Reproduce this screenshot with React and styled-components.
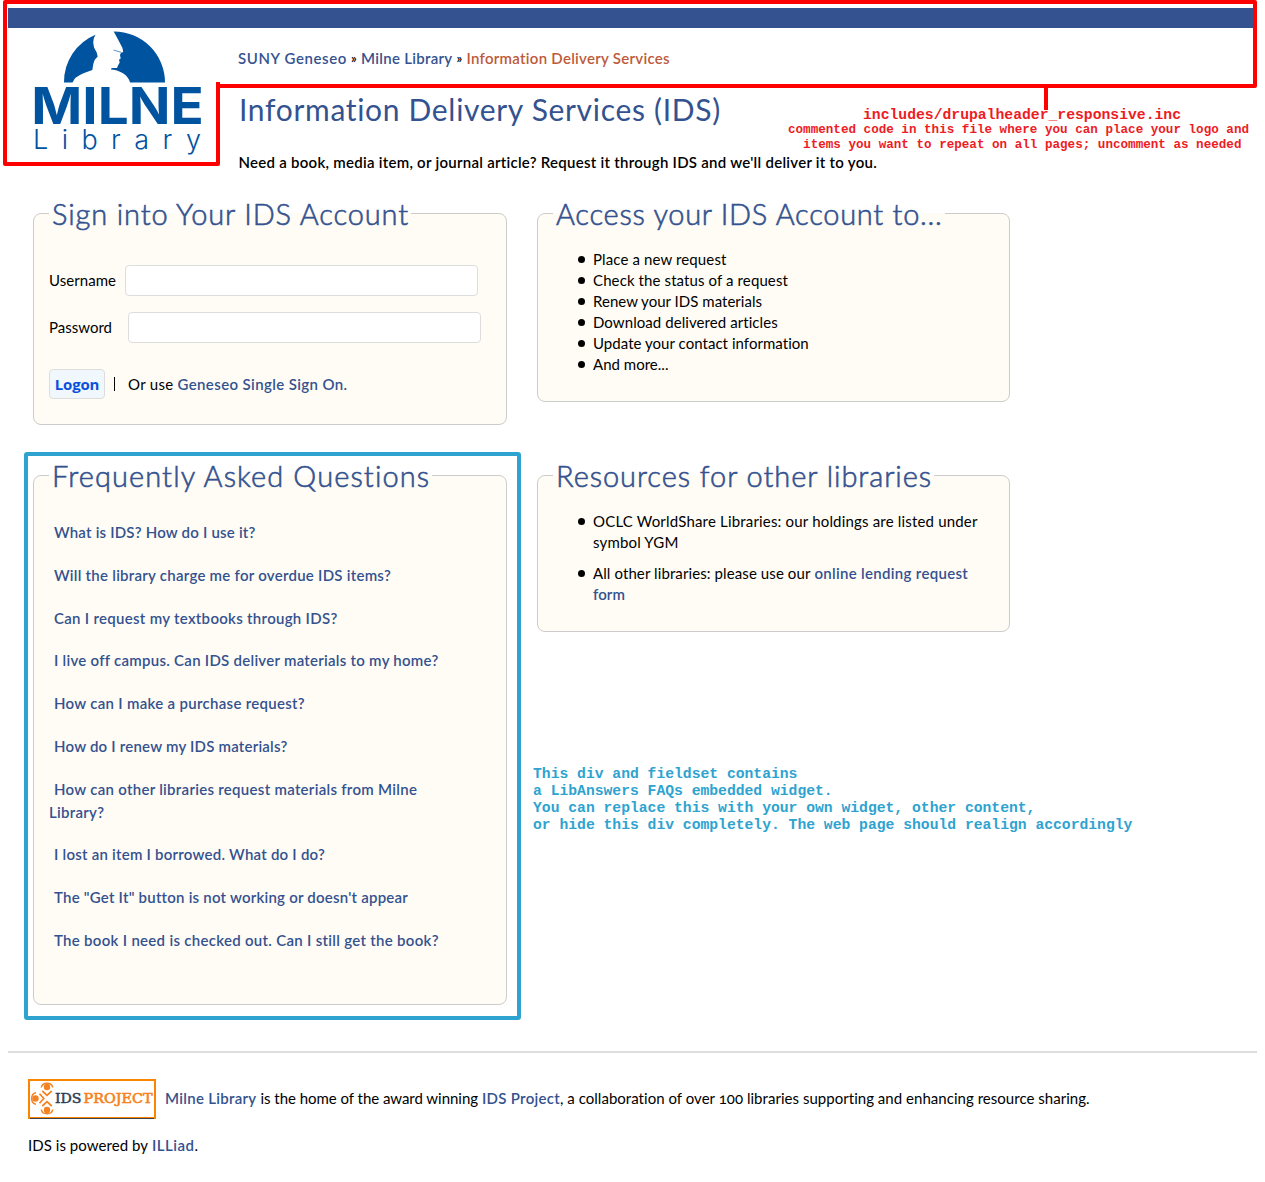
import React from "react";
import styled, { createGlobalStyle } from "styled-components";

const navy = "#34528f";
const red = "#fe0000";
const cyan = "#2ea3cf";

const GlobalStyle = createGlobalStyle`
  *, *::before { box-sizing: border-box; }
  body {
    margin: 0;
    background: #fff;
    color: #000;
    font-family: Lato, "Open Sans", sans-serif;
    font-size: 15px;
    font-variant-numeric: oldstyle-nums;
    white-space: nowrap;
  }
`;

const Page = styled.div`
  position: relative;
  width: 1265px;
  height: 1182px;
  padding: 8px;
  overflow: hidden;
`;

const TopBar = styled.div`
  height: 20px;
  background: ${navy};
`;

const Header = styled.header`
  display: grid;
  grid-template-columns: 204px 1fr;
  height: 167px;
  padding-left: 26px;
`;

const HeaderText = styled.div`
  padding-top: 20px;
`;

const Text = styled.span`
  letter-spacing: ${(p) => p.$track || 0}px;
`;

const Link = styled.a`
  color: ${(p) => (p.$current ? "#bd5a3a" : navy)};
  font-weight: 600;
  letter-spacing: ${(p) => p.$track || 0.28}px;
  text-decoration: none;
`;

const Breadcrumb = styled.nav`
  display: flex;
  gap: 4px;
  height: 20px;
  line-height: 20px;
`;

const Separator = styled.span`
  width: 6px;
  font-size: 13px;
  font-weight: 600;
`;

const Title = styled.h1`
  margin: 21px 0 23px;
  padding-left: 1px;
  color: ${navy};
  font-size: 30px;
  font-weight: 400;
  line-height: 40px;
  letter-spacing: 0.68px;
`;

const Intro = styled.p`
  margin: 0;
  padding-left: 0.5px;
  font-weight: 600;
  line-height: 20px;
  letter-spacing: 0.268px;
`;

const Columns = styled.main`
  display: grid;
  grid-template-columns: 474px 473px;
  column-gap: 30px;
  row-gap: 32px;
  align-items: start;
  margin-left: 25px;
`;

const Card = styled.fieldset`
  height: ${(p) => p.$height}px;
  min-width: 0;
  margin: 0;
  padding: 0 15px;
  border: 1px solid #ccc;
  border-radius: 8px;
  background: #fffcf5;
`;

const Legend = styled.legend`
  height: 37px;
  padding: 0 2px 0 3px;
  color: ${navy};
  font-size: 29px;
  font-weight: 300;
  line-height: 37px;
  letter-spacing: ${(p) => p.$track}px;
  -webkit-text-stroke: 0.6px ${navy};
`;

const Field = styled.label`
  display: flex;
  align-items: center;
  gap: ${(p) => p.$gap}px;
  height: 31px;
  margin-top: ${(p) => p.$top}px;
`;

const FieldLabel = styled(Text)`
  padding-bottom: 2px;
`;

const Input = styled.input`
  width: 353px;
  height: 31px;
  border: 1px solid #ddd;
  border-radius: 4px;
  background: #fff;
`;

const Actions = styled.div`
  display: flex;
  align-items: center;
  height: 30px;
  margin-top: 26px;
`;

const LogonButton = styled.button`
  width: 56px;
  height: 30px;
  padding: 0;
  border: 1px solid #ddd;
  border-radius: 4px;
  background: #f0f8fd;
  color: #0b50dc;
  font: 700 15px/26px "Open Sans", sans-serif;
  letter-spacing: -0.18px;
`;

const Divider = styled.span`
  width: 1px;
  height: 14px;
  margin: 0 13px 0 9px;
  background: #000;
`;

const Choice = styled.span`
  display: flex;
  gap: 4px;
`;

const List = styled.ul`
  display: flex;
  flex-direction: column;
  gap: ${(p) => p.$gap || 0}px;
  margin: 0;
  padding: 17px 0 0 25px;
  list-style: none;
  line-height: 21px;
`;

const Item = styled.li`
  display: grid;
  grid-template-columns: 15px 1fr;

  &::before {
    content: "";
    width: 7px;
    height: 7px;
    margin-top: 7px;
    border-radius: 50%;
    background: #000;
  }
`;

const Line = styled.div`
  display: flex;
  gap: 4px;
`;

const Questions = styled.div`
  display: flex;
  flex-direction: column;
  gap: 20px;
  padding: 27px 0 0;
  line-height: 22.8px;
`;

const Question = styled(Link)`
  display: block;
  text-indent: 5px;
  white-space: pre-line;
`;

const Footer = styled.footer`
  height: 120px;
  margin-top: 46px;
  padding: 26px 20px 0;
  border-top: 2px solid #ddd;
`;

const FooterRow = styled.div`
  display: flex;
  align-items: center;
  gap: 4px;
  height: ${(p) => p.$height}px;
  margin-top: ${(p) => p.$top || 0}px;
  padding-bottom: ${(p) => p.$lift || 0}px;
  line-height: 20px;
`;

const Badge = styled.div`
  align-self: flex-start;
  width: 128px;
  height: 40px;
  margin-right: 5px;
  border: 2px solid #fb8500;
`;

const FrameDrawing = styled.svg`
  position: absolute;
  top: 0;
  left: 0;
  pointer-events: none;
`;

const WidgetFrame = styled.div`
  position: absolute;
  top: 452px;
  left: 24px;
  width: 497px;
  height: 568px;
  border: 4px solid ${cyan};
  border-radius: 3px;
  pointer-events: none;
`;

const Note = styled.div`
  position: absolute;
  font-family: "Courier New", "Liberation Mono", monospace;
  font-weight: 700;
`;

const HeaderNote = styled(Note)`
  top: 107px;
  left: 788px;
  width: 461px;
  color: #ed1c24;
  font-size: 12.6px;
  line-height: 14.5px;
  text-align: center;
`;

const FileName = styled.div`
  padding-left: 7px;
  font-size: 14.72px;
  line-height: 16px;
`;

const WidgetNote = styled(Note)`
  top: 766px;
  left: 533px;
  color: ${cyan};
  font-size: 14.7px;
  line-height: 17px;
`;

const LogoDrawing = styled.svg`
  display: block;
  overflow: visible;
`;

function MilneLogo() {
  return (
    <LogoDrawing width="184" height="132" viewBox="34 28 184 132" fill="#00539f">
      <path d="M64 82.500A51 51 0 0 1 95.500 34.800L93.800 38.300L93.200 42.500L94 47.500L96.700 52.500L97.700 56.500L94.600 60L93.300 64L92.300 70L83.500 73.300C79 75.500 76 77 74.500 79L72.500 82.500Z" />
      <path d="M113.700 31.500A51 51 0 0 1 165 82.500H130C129 78 125.500 74.500 121.500 72.500C118 70.500 114 69.800 111 69.500L111.600 67.900L117 67.900L118.300 65L119.700 62.500L119 59.700L120.700 58.500L120 55L121 52.700L123.200 51.900L122.500 48L118.300 40Z" />
      <path d="M113.500 50L121 52.300" fill="none" stroke="#5b93c7" strokeWidth="1" />
      <text x="31.300" y="124" fontFamily="Inter" fontSize="51" fontWeight="700" textLength="172.500" lengthAdjust="spacingAndGlyphs">MILNE</text>
      <text x="33" y="149" fontFamily="Inter" fontSize="27" fontWeight="300" textLength="168" lengthAdjust="spacing">Library</text>
    </LogoDrawing>
  );
}

function Figure({ turn }) {
  return (
    <g transform={`rotate(${turn} 17 17.500)`}>
      <circle cx="17" cy="6" r="3.200" fill="#f58220" />
      <path d="M11.300 6.500C12 2.200 15 2.200 17 2.200S22 2.200 22.700 6.500" fill="none" stroke="#f58220" strokeWidth="1.500" />
      <path d="M12.300 10L17 14.300L21.700 10" fill="none" stroke="#f58220" strokeWidth="1.700" />
    </g>
  );
}

function IdsBadge() {
  return (
    <Badge>
      <LogoDrawing width="124" height="36" viewBox="0 0 124 36">
        <Figure turn={0} />
        <Figure turn={180} />
        <Figure turn={270} />
        <text x="25" y="22.300" fill="#2f3e55" fontFamily="DejaVu Serif" fontSize="13.500" stroke="#2f3e55" strokeWidth=".5" textLength="26.500" lengthAdjust="spacingAndGlyphs">IDS</text>
        <text x="53.500" y="22.300" fill="#f58220" fontFamily="DejaVu Serif" fontSize="13.500" stroke="#f58220" strokeWidth=".6" textLength="69" lengthAdjust="spacingAndGlyphs">PROJECT</text>
        <path d="M0 37.500H124" stroke="#3c4250" />
      </LogoDrawing>
    </Badge>
  );
}

const accountItems = [
  ["Place a new request", 0.121],
  ["Check the status of a request", 0.109],
  ["Renew your IDS materials", 0.023],
  ["Download delivered articles", 0.071],
  ["Update your contact information", 0.041],
  ["And more...", 0.02],
];

const questions = [
  ["What is IDS? How do I use it?", 0.202],
  ["Will the library charge me for overdue IDS items?", 0.259],
  ["Can I request my textbooks through IDS?", 0.294],
  ["I live off campus. Can IDS deliver materials to my home?", 0.264],
  ["How can I make a purchase request?", 0.297],
  ["How do I renew my IDS materials?", 0.211],
  ["How can other libraries request materials from Milne\nLibrary?", 0.285],
  ["I lost an item I borrowed. What do I do?", 0.236],
  ['The "Get It" button is not working or doesn\'t appear', 0.221],
  ["The book I need is checked out. Can I still get the book?", 0.295],
];

export default function App() {
  return (
    <Page>
      <GlobalStyle />
      <TopBar />
      <Header>
        <MilneLogo />
        <HeaderText>
          <Breadcrumb>
            <Link $track={0.607}>SUNY Geneseo</Link>
            <Separator>»</Separator>
            <Link $track={0.296}>Milne Library</Link>
            <Separator>»</Separator>
            <Link $current $track={0.28}>Information Delivery Services</Link>
          </Breadcrumb>
          <Title>Information Delivery Services (IDS)</Title>
          <Intro>
            Need a book, media item, or journal article? Request it through IDS and we'll deliver it to you.
          </Intro>
        </HeaderText>
      </Header>

      <Columns>
        <Card $height={230}>
          <Legend $track={0.865}>Sign into Your IDS Account</Legend>
          <Field $top={33} $gap={9}>
            <FieldLabel $track={0.045}>Username</FieldLabel>
            <Input type="text" />
          </Field>
          <Field $top={16} $gap={16}>
            <FieldLabel>Password</FieldLabel>
            <Input type="password" />
          </Field>
          <Actions>
            <LogonButton>Logon</LogonButton>
            <Divider />
            <Choice>
              <Text $track={0.313}>Or use</Text>
              <Link $track={0.382}>Geneseo Single Sign On.</Link>
            </Choice>
          </Actions>
        </Card>

        <Card $height={207}>
          <Legend $track={0.72}>Access your IDS Account to...</Legend>
          <List>
            {accountItems.map(([label, track]) => (
              <Item key={label}>
                <Text $track={track}>{label}</Text>
              </Item>
            ))}
          </List>
        </Card>

        <Card $height={548}>
          <Legend $track={1.1}>Frequently Asked Questions</Legend>
          <Questions>
            {questions.map(([label, track]) => (
              <Question key={label} $track={track}>{label}</Question>
            ))}
          </Questions>
        </Card>

        <Card $height={175}>
          <Legend $track={0.94}>Resources for other libraries</Legend>
          <List $gap={10}>
            <Item>
              <div>
                <Line><Text $track={0.18}>OCLC WorldShare Libraries: our holdings are listed under</Text></Line>
                <Line><Text $track={0.169}>symbol YGM</Text></Line>
              </div>
            </Item>
            <Item>
              <div>
                <Line>
                  <Text $track={0.1}>All other libraries: please use our</Text>
                  <Link $track={0.31}>online lending request</Link>
                </Line>
                <Line><Link $track={0.082}>form</Link></Line>
              </div>
            </Item>
          </List>
        </Card>
      </Columns>

      <Footer>
        <FooterRow $height={40} $lift={3}>
          <IdsBadge />
          <Link $track={0.296}>Milne Library</Link>
          <Text $track={-0.036}>is the home of the award winning</Text>
          <span>
            <Link $track={0.283}>IDS Project</Link>
            <Text $track={0.033}>, a collaboration of over 100 libraries supporting and enhancing resource sharing.</Text>
          </span>
        </FooterRow>
        <FooterRow $height={20} $top={16}>
          <Text $track={0.049}>IDS is powered by</Text>
          <span>
            <Link $track={0.5}>ILLiad</Link>
            <Text>.</Text>
          </span>
        </FooterRow>
      </Footer>

      <FrameDrawing width="1265" height="180" fill="none" stroke={red} strokeWidth="4" strokeLinejoin="round">
        <path d="M5 2H1255V86H218V164H5ZM1046 86V110" />
        <path d="M218 82V90" />
      </FrameDrawing>
      <HeaderNote>
        <FileName>includes/drupalheader_responsive.inc</FileName>
        <div>commented code in this file where you can place your logo and</div>
        <div>&nbsp;items you want to repeat on all pages; uncomment as needed</div>
      </HeaderNote>
      <WidgetFrame />
      <WidgetNote>
        <div>This div and fieldset contains</div>
        <div>a LibAnswers FAQs embedded widget.</div>
        <div>You can replace this with your own widget, other content,</div>
        <div>or hide this div completely. The web page should realign accordingly</div>
      </WidgetNote>
    </Page>
  );
}
